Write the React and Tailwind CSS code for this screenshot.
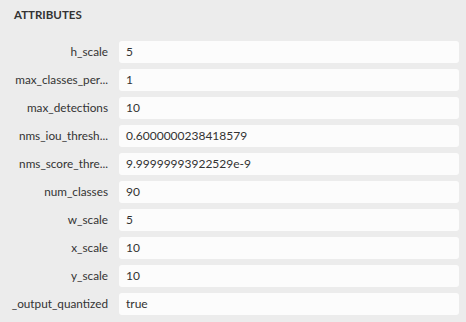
import React from 'react';

const attributes = [
  ['h_scale', '5'],
  ['max_classes_per...', '1'],
  ['max_detections', '10'],
  ['nms_iou_thresh...', '0.6000000238418579'],
  ['nms_score_thre...', '9.99999993922529e-9'],
  ['num_classes', '90'],
  ['w_scale', '5'],
  ['x_scale', '10'],
  ['y_scale', '10'],
  ['_output_quantized', 'true'],
];

const App = () => {
  return (
    <div
      className="w-[466px] h-[322px] bg-[#ececec] text-[#333333] pl-[14px] pr-[7px] pt-[8px] overflow-hidden"
      style={{ fontFamily: 'Lato, "Noto Sans", sans-serif' }}
    >
      <h3 className="text-[11.5px] font-bold leading-[14px] h-[14px]">ATTRIBUTES</h3>
      <div className="flex flex-col gap-[6px] mt-[19px]">
        {attributes.map(([name, value]) => (
          <div key={name} className="flex items-center">
            <div className="w-[94px] shrink-0 flex justify-end text-[11.75px] leading-[22px] whitespace-nowrap">
              {name}
            </div>
            <div className="ml-[11px] flex-1 h-[22px] bg-[#fcfcfc] rounded-[3px] px-[7px] text-[12px] leading-[22px] whitespace-nowrap">
              {value}
            </div>
          </div>
        ))}
      </div>
    </div>
  );
};

export default App;
